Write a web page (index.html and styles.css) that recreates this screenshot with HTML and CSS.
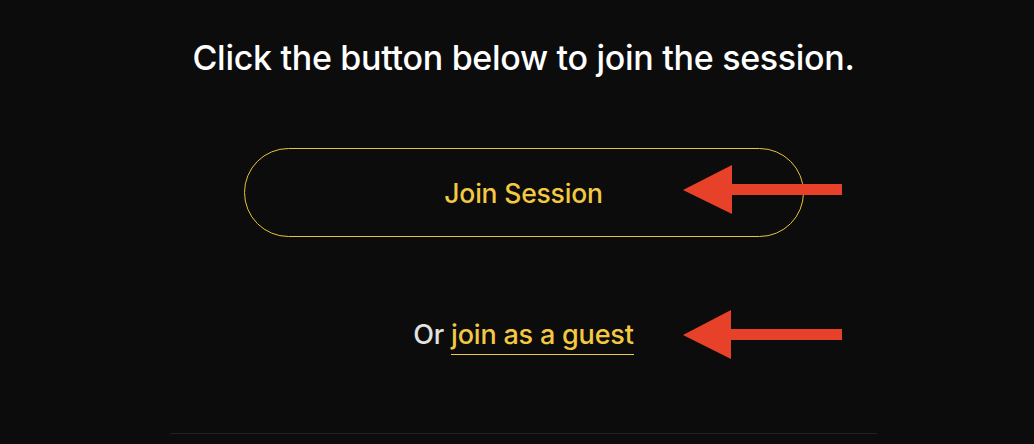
FILE: index.html
```html
<!DOCTYPE html>
<html lang="en">
<head>
<meta charset="utf-8">
<title>Join Session</title>
<link rel="stylesheet" href="styles.css">
</head>
<body>
<div class="page">
  <main class="panel">
    <h1 class="title">Click the button below to join the session.</h1>
    <div class="actions">
      <a class="join-btn" href="#">Join Session</a>
      <p class="guest">Or <a class="guest-link" href="#">join as a guest</a></p>
    </div>
    <hr class="divider">
  </main>
  <svg class="annotations" width="1034" height="444" viewBox="0 0 1034 444" aria-hidden="true">
    <polygon points="683,190 732,165 732,184 842,184 842,195 732,195 732,214" fill="#e8412a"/>
    <polygon points="683,335 731,310 731,329 842,329 842,340 731,340 731,359" fill="#e8412a"/>
  </svg>
</div>
</body>
</html>
```
FILE: styles.css
```css
html, body {
  margin: 0;
  padding: 0;
  background: #0c0c0c;
}
body {
  font-family: "Inter", "Liberation Sans", sans-serif;
  color: #ffffff;
  width: 1034px;
  height: 444px;
  overflow: hidden;
}
.page {
  position: relative;
  width: 1034px;
  height: 444px;
}
.panel {
  margin-left: 170px;
  width: 707px;
  display: flex;
  flex-direction: column;
  align-items: center;
}
.title {
  margin: 0;
  padding-top: 36px;
  font-size: 34px;
  line-height: 44px;
  font-weight: 500;
  letter-spacing: -0.3px;
  color: #ffffff;
}
.actions {
  display: flex;
  flex-direction: column;
  align-items: center;
  margin-top: 68px;
}
.join-btn {
  box-sizing: border-box;
  width: 560px;
  height: 89px;
  border: 1px solid #e9c23b;
  border-radius: 45px;
  display: flex;
  align-items: center;
  justify-content: center;
  color: #f3c842;
  font-size: 26.5px;
  font-weight: 500;
  text-decoration: none;
  letter-spacing: -0.2px;
}
.guest {
  margin: 82px 0 0;
  font-size: 27px;
  line-height: 32px;
  font-weight: 500;
  color: #e2e2e2;
  letter-spacing: -0.2px;
}
.guest-link {
  color: #f3c842;
  text-decoration: none;
  border-bottom: 1.5px solid #f3c842;
  padding-bottom: 3px;
}
.divider {
  width: 707px;
  height: 0;
  margin: 82px 0 0;
  border: 0;
  border-top: 1px solid #222222;
}
.annotations {
  position: absolute;
  top: 0;
  left: 0;
  pointer-events: none;
}
```
